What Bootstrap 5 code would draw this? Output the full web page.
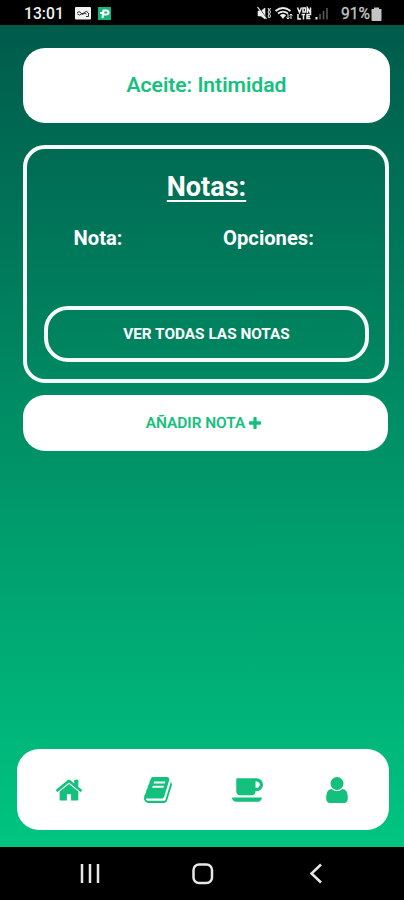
<!DOCTYPE html>
<html lang="es">
<head>
<meta charset="utf-8">
<meta name="viewport" content="width=device-width, initial-scale=1">
<title>Aceite: Intimidad</title>
<link href="https://cdn.jsdelivr.net/npm/bootstrap@5.3.0/dist/css/bootstrap.min.css" rel="stylesheet">
<style>
  body { font-family: Roboto, "Liberation Sans", sans-serif; background: #000; height: 900px; overflow: hidden; }
  svg { display: block; flex: none; }
  .status { height: 25px; padding: 2px 22px 0 24px; font-size: 15.700px; font-weight: 500; color: #f2f2f2; line-height: 24px; }
  .battery { color: #c4c4c4; font-weight: 400; margin: 0 1px 0 10px; -webkit-text-stroke: .3px; }
  .app-icon { margin-left: 11px; }
  .pay-icon { margin-left: 7px; }
  .screen { height: 822px; padding: 23px 15px 17px 17px; background: linear-gradient(#005b4b, #00c581); }
  .panel { background: #fff; border-radius: 22px; color: #13c07c; }
  .title-panel { height: 75px; margin: 0 -1px 22px 6px; padding-bottom: 2px; font-size: 21.100px; font-weight: 500; -webkit-text-stroke: .2px; }
  .notes { height: 238px; margin: 0 0 12px 6px; border: 4px solid #f4fbf8; border-radius: 22px; color: #fff; padding: 20px 16px 17px 17px; }
  .notes h1 { font-size: 27px; font-weight: 700; line-height: 36px; margin: 0; text-decoration-thickness: 2.500px; text-underline-offset: 4px; text-decoration-skip-ink: none; }
  .heads { font-size: 20.200px; font-weight: 700; line-height: 26px; margin-top: 20px; }
  .heads .first { width: 108px; }
  .heads .second { padding-left: 16px; }
  .btn-all { height: 56px; padding: 2px 0 0; border: 4px solid #f4fbf8; border-radius: 24px; color: #fff; font-size: 15.350px; font-weight: 700; }
  .btn-add { height: 56px; margin: 0 1px 0 6px; padding: 0 4px 0 0; border: 0; font-size: 15.400px; font-weight: 500; -webkit-text-stroke: .2px; }
  .btn-add span { padding-top: 2px; }
  .tabs { height: 81px; padding: 0 7px 0 7px; }
  .sys { height: 53px; }
</style>
<script src="https://cdn.jsdelivr.net/npm/bootstrap@5.3.0/dist/js/bootstrap.bundle.min.js"></script>
</head>
<body class="d-flex flex-column">
<header class="status d-flex align-items-center">
  <span>13:01</span>
  <svg class="app-icon" width="16" height="13" viewBox="0 0 16 13"><rect width="16" height="12.500" rx="1" fill="#f2f2f2"/><path d="M2 6q2-3 4 0t4-1q2-2 3 1M2.500 7q2 2 4 0t5 0M11 9.500h2.500V6" fill="none" stroke="#333" stroke-width="1"/></svg>
  <svg class="pay-icon" width="13" height="13" viewBox="0 0 13 13"><rect width="13" height="13" fill="#12b57c"/><path d="M4.500 11l1-7.500h2.700q2.300 0 2.300 2T8 7.500H5M2 6h3" fill="none" stroke="#fff" stroke-width="2"/></svg>
  <div class="d-flex align-items-center ms-auto">
    <svg width="75" height="15" viewBox="0 0 75 15" fill="none" stroke="#eee" stroke-width="1.500">
      <path d="M2 5h3l4-3v11l-4-3H2z" fill="#eee" stroke="#eee" stroke-width=".6"/><path d="M2.800 1l8 12" stroke="#000" stroke-width="1"/><path d="M1.500 1l9 12" stroke-width="1.200"/><path d="M12 2l1 2-1 2 1 2-1 2 1 2M14.500 2l-1 2 1 2-1 2 1 2-1 2" stroke-width="1"/>
      <path d="M19.500 5q7.500-6 15 0M22 7.500q5-3.700 10 0M24.500 10q2.500-2 5 0" stroke-width="1.800"/><path d="M27 13l-2-3h4z" fill="#eee" stroke="none"/><path d="M32 8v5M30.500 11.500L32 13l1.500-1.500M35 13V8M33.500 9.500L35 8l1.500 1.500" stroke-width="1"/>
      <path d="M41.500 1.500l2 5 2-5M47 2h2.500v4H47zM51.500 7V2l3 5V1.500M42 8v5h3M45.500 8.500h3.500M47.500 8v5.500M54.500 8.500H51v4h3.500M51 10.500h3" stroke-width="1.500"/>
      <path d="M60.500 11v2.500" stroke-width="2"/><path d="M64 8v5.500M67.500 5v8.500M71 2v11.500" stroke="#5c5c5c"/>
    </svg>
    <span class="battery">91%</span>
    <svg width="11" height="14" viewBox="0 0 11 14"><path d="M3 .5h5V2h2.500v11q0 1-1 1h-8q-1 0-1-1V2H3z" fill="#c4c4c4"/></svg>
  </div>
</header>
<main class="screen d-flex flex-column">
  <section class="panel title-panel d-flex align-items-center justify-content-center"><span>Aceite: Intimidad</span></section>
  <section class="notes d-flex flex-column">
    <h1 class="text-center text-decoration-underline">Notas:</h1>
    <div class="row g-0 heads text-center"><div class="first col-auto">Nota:</div><div class="second col">Opciones:</div></div>
    <button class="btn btn-all w-100 mt-auto">VER TODAS LAS NOTAS</button>
  </section>
  <button class="btn panel btn-add d-flex align-items-center justify-content-center"><span>AÑADIR NOTA</span>
    <svg class="ms-1" width="12" height="12" viewBox="192 128 1408 1408" fill="currentColor"><path d="M1600 736v192q0 40-28 68t-68 28h-416v416q0 40-28 68t-68 28h-192q-40 0-68-28t-28-68v-416h-416q-40 0-68-28t-28-68v-192q0-40 28-68t68-28h416v-416q0-40 28-68t68-28h192q40 0 68 28t28 68v416h416q40 0 68 28t28 68z"/></svg>
  </button>
  <nav class="panel tabs row g-0 align-items-center mt-auto">
    <div class="col d-flex justify-content-center"><svg width="26" height="22" viewBox="97 240 1600 1296" fill="currentColor"><path d="M1472 992v480q0 26-19 45t-45 19h-384v-384h-256v384h-384q-26 0-45-19t-19-45v-480q0-1 .5-3t.5-3l575-474 575 474q1 2 1 6zm223-69l-62 74q-8 9-21 11h-3q-13 0-21-7l-692-577-692 577q-12 8-24 7-13-2-21-11l-62-74q-8-10-7-23.500t11-21.500l719-599q32-26 76-26t76 26l244 204v-195q0-14 9-23t23-9h192q14 0 23 9t9 23v408l219 182q10 8 11 21.500t-7 23.500z"/></svg></div>
    <div class="col d-flex justify-content-center"><svg width="28" height="26" viewBox="64 128 1667 1536" fill="currentColor"><path d="M1703 478q40 57 18 129l-275 906q-19 64-76.500 107.500t-122.500 43.500h-923q-77 0-148.500-53.500t-99.500-131.500q-24-67-2-127 0-4 3-27t4-37q1-8-3-21.500t-3-19.500q2-11 8-21t16.500-23.500 16.500-23.500q23-38 45-91.500t30-91.500q3-10 .5-30t-.5-28q3-11 17-28t17-23q21-36 42-92t25-90q1-9-2.500-32t.5-28q4-13 22-30.500t22-22.500q19-26 42.500-84.500t27.500-96.500q1-8-3-25.500t-2-26.500q2-8 9-18t18-23 17-21q8-12 16.500-30.500t15-35 16-36 19.500-32 26.500-23.500 36-11.500 47.500 5.500l-1 3q38-9 51-9h761q74 0 114 56t18 130l-274 906q-36 119-71.500 153.500t-128.500 34.500h-869q-27 0-38 15-11 16-1 43 24 70 144 70h923q29 0 56-15.500t35-41.500l300-987q7-22 5-57 38 15 59 43zm-1064 2q-4 13 2 22.500t20 9.500h608q13 0 25.500-9.500t16.500-22.500l21-64q4-13-2-22.500t-20-9.500h-608q-13 0-25.500 9.500t-16.500 22.500zm-83 256q-4 13 2 22.500t20 9.500h608q13 0 25.500-9.500t16.500-22.500l21-64q4-13-2-22.500t-20-9.500h-608q-13 0-25.500 9.500t-16.500 22.500z"/></svg></div>
    <div class="col d-flex justify-content-center"><svg width="31" height="24" viewBox="0 256 1856 1408" fill="currentColor"><path d="M1664 640q0-80-56-136t-136-56h-64v384h64q80 0 136-56t56-136zm-1664 768h1792q0 106-75 181t-181 75h-1280q-106 0-181-75t-75-181zm1856-768q0 159-112.500 271.500t-271.500 112.500h-64v32q0 92-66 158t-158 66h-704q-92 0-158-66t-66-158v-736q0-26 19-45t45-19h1152q159 0 271.500 112.500t112.500 271.500z"/></svg></div>
    <div class="col d-flex justify-content-center"><svg width="22" height="26" viewBox="256 128 1280 1536" fill="currentColor"><path d="M1536 1399q0 109-62.500 187t-150.500 78h-854q-88 0-150.500-78t-62.500-187q0-85 8.500-160.500t31.500-152 58.500-131 94-89 134.500-34.500q131 128 313 128t313-128q76 0 134.500 34.500t94 89 58.500 131 31.500 152 8.500 160.500zm-256-887q0 159-112.500 271.500t-271.500 112.500-271.500-112.500-112.500-271.500 112.500-271.500 271.500-112.500 271.500 112.500 112.500 271.500z"/></svg></div>
  </nav>
</main>
<footer class="sys d-flex justify-content-center align-items-center">
  <svg width="404" height="53" viewBox="0 0 404 53" fill="none" stroke="#e8e8e8" stroke-width="2.500"><path d="M82 17v19M90 17v19M98 17v19"/><rect x="193.500" y="17.500" width="18.500" height="18.500" rx="5.500"/><path d="M321 17.500l-9.500 9 9.500 9"/></svg>
</footer>
</body>
</html>
